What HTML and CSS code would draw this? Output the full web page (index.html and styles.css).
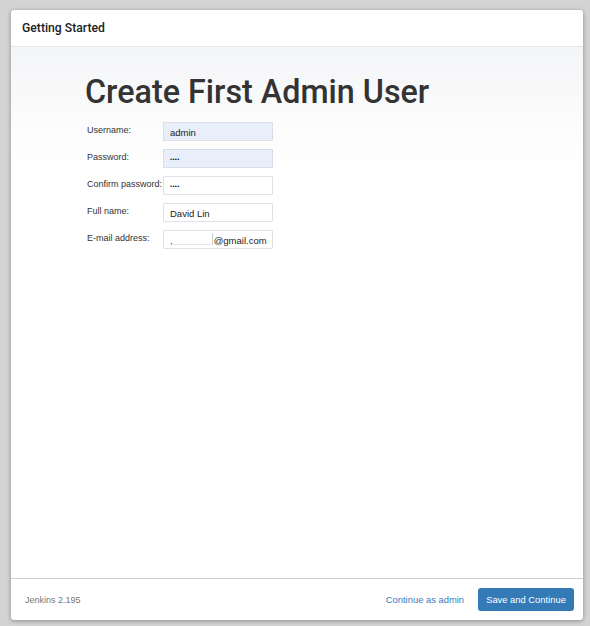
FILE: index.html
```html
<!DOCTYPE html>
<html>
<head>
<meta charset="utf-8">
<link rel="stylesheet" href="styles.css">
</head>
<body>
<div class="modal">
  <div class="modal-header">Getting Started</div>
  <div class="modal-body">
    <h1 class="title">Create First Admin User</h1>
    <div class="form">
      <div class="row"><span class="label">Username:</span><span class="input filled">admin</span></div>
      <div class="row"><span class="label">Password:</span><span class="input filled dots">••••</span></div>
      <div class="row"><span class="label">Confirm password:</span><span class="input dots">••••</span></div>
      <div class="row"><span class="label">Full name:</span><span class="input">David Lin</span></div>
      <div class="row"><span class="label">E-mail address:</span><span class="input">,<span class="redact"></span>@gmail.com</span></div>
    </div>
  </div>
  <div class="modal-footer">
    <span class="version">Jenkins 2.195</span>
    <div class="actions">
      <span class="link">Continue as admin</span>
      <span class="btn">Save and Continue</span>
    </div>
  </div>
</div>
</body>
</html>
```
FILE: styles.css
```css
html, body { margin: 0; padding: 0; }
body {
  background: #d3d3d3;
  width: 590px;
  height: 626px;
  padding: 10px 7px 6px 11px;
  box-sizing: border-box;
  font-family: "Liberation Sans", Arial, sans-serif;
}
.modal {
  background: #fff;
  height: 610px;
  width: 572px;
  border-radius: 3px;
  box-shadow: 0 1px 4px rgba(0,0,0,0.35);
  display: flex;
  flex-direction: column;
  overflow: hidden;
}
.modal-header {
  height: 37px;
  box-sizing: border-box;
  border-bottom: 1px solid #e3e7ef;
  padding: 11px 0 0 11px;
  font-family: Roboto, sans-serif;
  font-size: 12.2px;
  font-weight: 500;
  color: #222;
}
.modal-body {
  flex: 1;
  background: linear-gradient(to bottom, #f4f5f7 0px, #fdfdfd 90px, #ffffff 140px);
  padding: 0 0 0 74px;
}
.title {
  margin: 26px 0 0 0;
  font-family: Roboto, sans-serif;
  font-weight: 500;
  font-size: 32.3px;
  line-height: 38px;
  color: #333;
}
.form {
  margin-top: 11px;
  display: flex;
  flex-direction: column;
  gap: 8px;
}
.row {
  display: flex;
  align-items: center;
  height: 19px;
}
.label {
  width: 76px;
  padding-left: 2px;
  font-size: 9px;
  color: #333;
  white-space: nowrap;
  margin-top: -4px;
}
.input {
  width: 110px;
  height: 19px;
  box-sizing: border-box;
  border: 1px solid #dde1ea;
  border-radius: 1px;
  background: #fff;
  font-size: 9.5px;
  color: #222;
  padding: 4px 0 0 6px;
  display: flex;
  align-items: flex-start;
  white-space: nowrap;
}
.input.filled { background: #e8eefa; border-style: dotted; border-color: #c8cdd8; }
.input.dots { font-size: 6px; padding-top: 6px; letter-spacing: 0.3px; }
.redact {
  display: inline-block;
  width: 41px;
  height: 11px;
  border-bottom: 1px solid #e3e6ef;
  border-right: 1px solid #c8ccd6;
  margin-top: -2px;
  margin-left: -2px;
  margin-right: 1px;
}
.modal-footer {
  height: 42px;
  box-sizing: border-box;
  border-top: 1px solid #cfcfcf;
  display: flex;
  align-items: center;
  justify-content: space-between;
  padding: 0 9px 0 14px;
}
.version { font-size: 9px; color: #777; }
.actions { display: flex; align-items: center; gap: 14px; }
.link { font-size: 9.4px; color: #3d7ab8; }
.btn {
  background: #337ab7;
  color: #fff;
  font-size: 9.4px;
  border-radius: 3px;
  height: 23px;
  width: 96px;
  display: flex;
  align-items: center;
  justify-content: center;
}
```
